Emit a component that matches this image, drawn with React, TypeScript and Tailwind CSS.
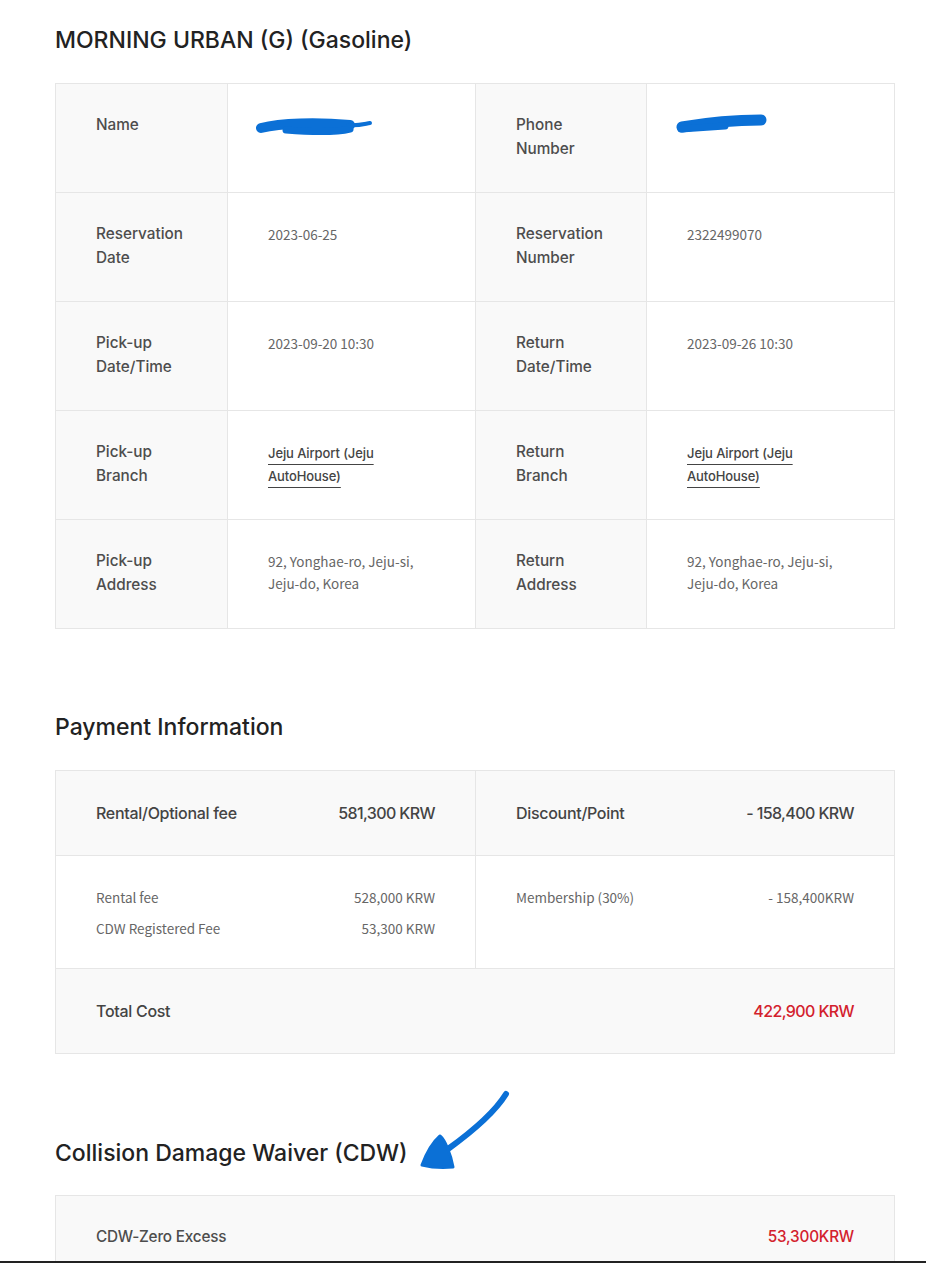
import React from 'react'

const SANS = "font-['Inter','Noto_Sans',sans-serif]"
const BODY = "font-['Noto_Sans_CJK_KR','Noto_Sans',sans-serif]"

// Hand-drawn blue marks used to hide personal data
const NameScribble = () => (
  <svg width="120" height="28" viewBox="0 0 120 28" className="-ml-3 mt-[-2px] block">
    <path d="M5 16 C 25 11, 60 10, 94 13" stroke="#0b70d6" strokeWidth="10" strokeLinecap="round" fill="none" />
    <path d="M30 18 C 55 20, 78 21, 94 17" stroke="#0b70d6" strokeWidth="7" strokeLinecap="round" fill="none" />
    <path d="M92 13 C 102 14, 108 12, 114 11" stroke="#0b70d6" strokeWidth="4" strokeLinecap="round" fill="none" />
  </svg>
)

const PhoneScribble = () => (
  <svg width="96" height="26" viewBox="0 0 96 26" className="-ml-3 mt-[-4px] block">
    <path d="M7 17 C 30 13, 60 10, 86 10" stroke="#0b70d6" strokeWidth="11" strokeLinecap="round" fill="none" />
    <path d="M6 19 C 20 18, 34 17, 50 16" stroke="#0b70d6" strokeWidth="7" strokeLinecap="round" fill="none" />
  </svg>
)

const Label = ({ children }: { children: React.ReactNode }) => (
  <div className={`bg-[#f9f9f9] pl-10 pr-6 pt-[29px] text-[15.3px] leading-6 font-medium text-[#4d4d4d] ${SANS}`}>
    {children}
  </div>
)

const Value = ({ children }: { children: React.ReactNode }) => (
  <div className={`bg-white pl-10 pr-10 pt-[30px] text-[13.5px] leading-[22px] text-[#666] ${BODY}`}>
    {children}
  </div>
)

const BranchLink = () => (
  <span className={`font-medium text-[#444] underline decoration-[#444] underline-offset-[6px] ${SANS} text-[13px] tracking-[-0.1px]`}>
    Jeju Airport (Jeju AutoHouse)
  </span>
)

const Heading = ({ children }: { children: React.ReactNode }) => (
  <h2 className={`text-[23px] leading-[30px] font-medium text-[#222] ${SANS}`}>{children}</h2>
)

export default function App() {
  return (
    <div className="relative h-[1263px] overflow-hidden border-b-2 border-[#222] bg-white pl-[55px] pr-[31px] pt-[25px]">
      <Heading>MORNING URBAN (G) (Gasoline)</Heading>

      {/* Reservation details */}
      <div className="mt-[28px] grid grid-cols-[171px_247px_170px_247px] auto-rows-[108px] gap-px border border-[#e6e6e6] bg-[#e6e6e6]">
        <Label>Name</Label>
        <Value><NameScribble /></Value>
        <Label>Phone<br />Number</Label>
        <Value><PhoneScribble /></Value>

        <Label>Reservation<br />Date</Label>
        <Value>2023-06-25</Value>
        <Label>Reservation<br />Number</Label>
        <Value>2322499070</Value>

        <Label>Pick-up<br />Date/Time</Label>
        <Value>2023-09-20 10:30</Value>
        <Label>Return<br />Date/Time</Label>
        <Value>2023-09-26 10:30</Value>

        <Label>Pick-up<br />Branch</Label>
        <Value><BranchLink /></Value>
        <Label>Return<br />Branch</Label>
        <Value><BranchLink /></Value>

        <Label>Pick-up<br />Address</Label>
        <Value>92, Yonghae-ro, Jeju-si, Jeju-do, Korea</Value>
        <Label>Return<br />Address</Label>
        <Value>92, Yonghae-ro, Jeju-si, Jeju-do, Korea</Value>
      </div>

      {/* Payment */}
      <div className="mt-[83px]">
        <Heading>Payment Information</Heading>
      </div>
      <div className="mt-[28px] grid grid-cols-[419px_418px] gap-px border border-[#e6e6e6] bg-[#e6e6e6]">
        <div className={`flex justify-between bg-[#f9f9f9] px-10 py-[30px] text-[16px] leading-6 font-medium tracking-[-0.3px] text-[#444] ${SANS}`}>
          <span>Rental/Optional fee</span>
          <span className="tracking-[-0.6px]">581,300 KRW</span>
        </div>
        <div className={`flex justify-between bg-[#f9f9f9] px-10 py-[30px] text-[16px] leading-6 font-medium tracking-[-0.3px] text-[#444] ${SANS}`}>
          <span>Discount/Point</span>
          <span className="tracking-[-0.6px]">- 158,400 KRW</span>
        </div>

        <div className={`flex flex-col gap-[11px] bg-white px-10 pt-[31px] pb-[30px] text-[13.5px] leading-5 text-[#666] ${BODY}`}>
          <div className="flex justify-between">
            <span>Rental fee</span>
            <span>528,000 KRW</span>
          </div>
          <div className="flex justify-between">
            <span>CDW Registered Fee</span>
            <span>53,300 KRW</span>
          </div>
        </div>
        <div className={`flex flex-col bg-white px-10 pt-[31px] text-[13.5px] leading-5 text-[#666] ${BODY}`}>
          <div className="flex justify-between">
            <span>Membership (30%)</span>
            <span>- 158,400KRW</span>
          </div>
        </div>

        <div className={`col-span-2 flex justify-between bg-[#f9f9f9] px-10 pt-[30px] pb-[30px] text-[16px] leading-6 font-medium tracking-[-0.3px] ${SANS}`}>
          <span className="text-[#444]">Total Cost</span>
          <span className="tracking-[-0.6px] text-[#d3212d]">422,900 KRW</span>
        </div>
      </div>

      {/* CDW */}
      <div className="mt-[84px]">
        <Heading>Collision Damage Waiver (CDW)</Heading>
      </div>
      <div className="mt-[27px] border border-[#e6e6e6] bg-[#f9f9f9]">
        <div className={`flex justify-between px-10 pt-[29px] pb-[30px] text-[15.3px] leading-6 font-medium tracking-[-0.2px] ${SANS}`}>
          <span className="text-[#4d4d4d]">CDW-Zero Excess</span>
          <span className="text-[#d3212d]">53,300KRW</span>
        </div>
      </div>

      {/* Hand-drawn arrow annotation */}
      <svg className="pointer-events-none absolute left-[410px] top-[1085px]" width="110" height="90" viewBox="0 0 110 90">
        <path d="M96 9 C 88 22, 74 38, 38 64" stroke="#0b70d6" strokeWidth="6" strokeLinecap="round" fill="none" />
        <path d="M12 80 C 17 67, 23 57, 30 51 C 35 55, 41 70, 43 82 C 32 83, 20 82, 12 80 Z" fill="#0b70d6" stroke="#0b70d6" strokeWidth="3" strokeLinejoin="round" />
      </svg>
    </div>
  )
}
